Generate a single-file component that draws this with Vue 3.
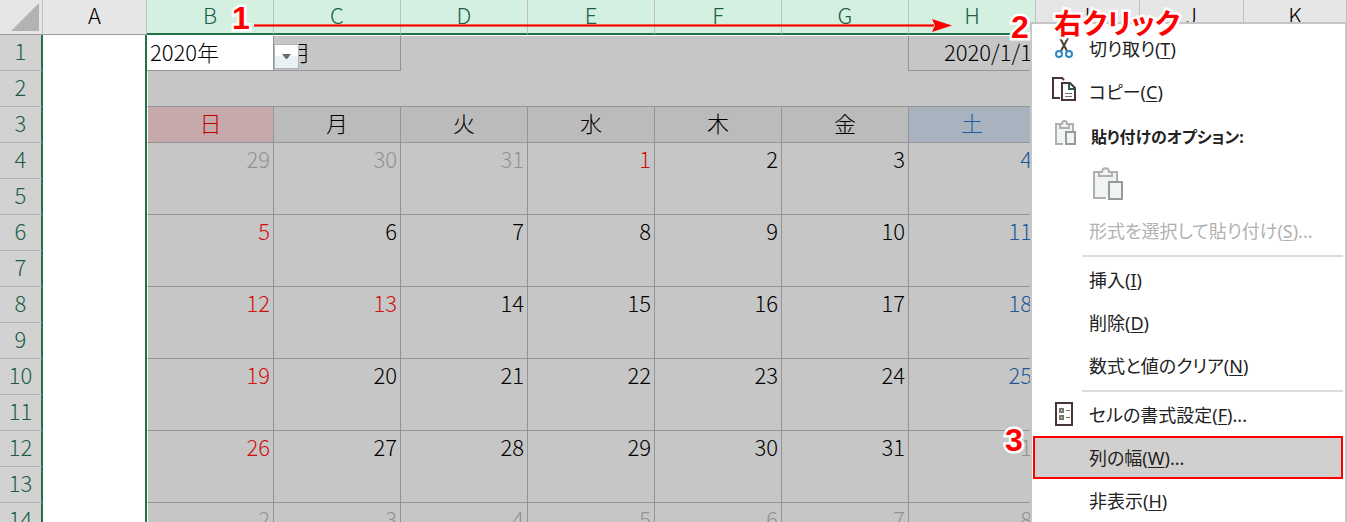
<script setup>
const columns = ["A", "B", "C", "D", "E", "F", "G", "H", "I", "J", "K"];
const days = ["日", "月", "火", "水", "木", "金", "土"];

const isSelected = (name) => name >= "B" && name <= "H";

const weeks = [
  [29, 30, 31, 1, 2, 3, 4],
  [5, 6, 7, 8, 9, 10, 11],
  [12, 13, 14, 15, 16, 17, 18],
  [19, 20, 21, 22, 23, 24, 25],
  [26, 27, 28, 29, 30, 31, 1],
  [2, 3, 4, 5, 6, 7, 8],
];

const holidays = ["0-3", "2-1"];

const dayClass = (w, d) => {
  const day = weeks[w][d];
  const other = (w === 0 && day > 7) || (w === 4 && day < 7) || w === 5;
  return {
    day: true,
    other,
    red: !other && (d === 0 || holidays.includes(`${w}-${d}`)),
    blue: !other && d === 6,
  };
};
</script>

<template>
  <main class="window">
    <table class="sheet">
      <colgroup>
        <col class="colHead" />
        <col
          v-for="name in columns"
          :key="name"
          :class="isSelected(name) ? 'colWide' : name === 'K' ? '' : 'col'"
        />
      </colgroup>
      <thead>
        <tr>
          <th class="corner">
            <svg width="43" height="33" viewBox="0 0 43 33" aria-hidden="true">
              <path d="M39 3V31H11Z" fill="#b3b3b3" />
            </svg>
          </th>
          <th
            v-for="name in columns"
            :key="name"
            scope="col"
            :class="{ selected: isSelected(name) }"
          >
            {{ name }}
          </th>
        </tr>
      </thead>
      <tbody>
        <tr class="first">
          <th scope="row">1</th>
          <td class="plain edge"></td>
          <td class="cell active line">2020年</td>
          <td class="cell line month">
            1月
            <button class="dropBtn" type="button" aria-label="年を選択">
              <svg width="9" height="5" viewBox="0 0 9 5">
                <path d="M0 0H9L5 5H4Z" fill="#6b6b63" />
              </svg>
            </button>
          </td>
          <td class="cell"></td>
          <td class="cell"></td>
          <td class="cell"></td>
          <td class="cell lineRight"></td>
          <td class="cell line date">2020/1/1</td>
          <td class="plain" colspan="3"></td>
        </tr>
        <tr>
          <th scope="row">2</th>
          <td class="plain edge"></td>
          <td class="cell lineBottom inner" colspan="7"></td>
          <td class="plain" colspan="3"></td>
        </tr>
        <tr>
          <th scope="row">3</th>
          <td class="plain edge"></td>
          <td
            v-for="(name, i) in days"
            :key="name"
            class="cell line dayName"
            :class="{ sunday: i === 0, saturday: i === 6, inner: i === 0 }"
          >
            {{ name }}
          </td>
          <td class="plain" colspan="3"></td>
        </tr>
        <template v-for="(week, w) in weeks" :key="w">
          <tr>
            <th scope="row">{{ w * 2 + 4 }}</th>
            <td class="plain edge"></td>
            <td
              v-for="(day, d) in week"
              :key="d"
              rowspan="2"
              class="cell line"
              :class="[dayClass(w, d), { inner: d === 0 }]"
            >
              {{ day }}
            </td>
            <td class="plain" colspan="3"></td>
          </tr>
          <tr>
            <th scope="row">{{ w * 2 + 5 }}</th>
            <td class="plain edge"></td>
            <td class="plain" colspan="3"></td>
          </tr>
        </template>
      </tbody>
    </table>

    <div class="menu" role="menu">
      <button type="button" role="menuitem" class="item">
        <svg class="icon" width="26" height="26" viewBox="0 0 26 26">
          <g fill="none">
            <path d="M9 4L16 17M17 4L10 17" stroke="#4a4238" stroke-width="2" />
            <circle cx="8" cy="20" r="3" stroke="#2f87c4" stroke-width="2" />
            <circle cx="18" cy="20" r="3" stroke="#2f87c4" stroke-width="2" />
          </g>
        </svg>
        <span>切り取り(<u>T</u>)</span>
      </button>
      <button type="button" role="menuitem" class="item">
        <svg class="icon" width="26" height="26" viewBox="0 0 26 26">
          <g fill="none" stroke="#4a343c" stroke-width="2">
            <path d="M9 21H2V1H11L13 3" />
            <path d="M11 6H19L24 11V23H11Z" fill="#fff" />
            <path d="M18 6V12H24" stroke="#2e5a4a" />
            <path d="M14 16.5H21M14 19.5H21" stroke="#77776a" stroke-width="1" />
          </g>
        </svg>
        <span>コピー(<u>C</u>)</span>
      </button>
      <div class="item heading">
        <svg class="icon" width="26" height="26" viewBox="0 0 26 26">
          <g fill="#f0f4f3" stroke="#b0b0b0" stroke-width="2">
            <path d="M12 24H5V4H22V11" />
            <path d="M9 8V4H11C11 0 16 0 16 4H18V8Z" />
            <path d="M15 12H24V24H15Z" stroke="#999" />
          </g>
        </svg>
        <span>貼り付けのオプション:</span>
      </div>
      <div class="pasteRow">
        <button type="button" class="pasteBtn" aria-label="貼り付け">
          <svg width="34" height="36" viewBox="0 0 34 36">
            <g fill="#f0f5f4" stroke="#b0b0b0" stroke-width="2">
              <path d="M15 31H3V5H26V14" />
              <path d="M8 9V5H11C11 0 18 0 18 5H21V9Z" />
              <path d="M18 15H31V32H18Z" stroke="#999" />
            </g>
          </svg>
        </button>
      </div>
      <button type="button" role="menuitem" class="item" disabled>
        <span>形式を選択して貼り付け(<u>S</u>)...</span>
      </button>
      <hr />
      <button type="button" role="menuitem" class="item">
        <span>挿入(<u>I</u>)</span>
      </button>
      <button type="button" role="menuitem" class="item">
        <span>削除(<u>D</u>)</span>
      </button>
      <button type="button" role="menuitem" class="item">
        <span>数式と値のクリア(<u>N</u>)</span>
      </button>
      <hr />
      <button type="button" role="menuitem" class="item">
        <svg class="icon" width="26" height="26" viewBox="0 0 26 26">
          <g fill="none">
            <path d="M5 3H21V25H5Z" stroke="#4a343c" stroke-width="2" />
            <path d="M9 9H12V12H9ZM9 16H12V19H9Z" stroke="#77776a" stroke-width="2" />
            <path d="M15 10.5H19M15 17.5H19" stroke="#77776a" stroke-width="1" />
          </g>
        </svg>
        <span>セルの書式設定(<u>F</u>)...</span>
      </button>
      <button type="button" role="menuitem" class="item current">
        <span>列の幅(<u>W</u>)...</span>
      </button>
      <button type="button" role="menuitem" class="item">
        <span>非表示(<u>H</u>)</span>
      </button>
    </div>

    <svg class="arrow" width="698" height="13" viewBox="0 0 698 13">
      <path d="M0 6.5H680" stroke="#ff0000" stroke-width="3" opacity="0.6" />
      <path d="M0 6.5H680" stroke="#ff0000" stroke-width="1" />
      <path d="M678 0L698 6.5L678 13L681 6.5Z" fill="#ff0000" />
    </svg>
    <span class="note one">1</span>
    <span class="note two">2</span>
    <span class="note click">右クリック</span>
    <span class="note three">3</span>
  </main>
</template>

<style>
body {
  margin: 0;
}
</style>

<style scoped>
.window {
  position: relative;
  height: 100vh;
  overflow: hidden;
  background: #fff;
  font-family: "Noto Sans CJK JP", sans-serif;
}

.sheet {
  width: 100%;
  table-layout: fixed;
  border-collapse: separate;
  border-spacing: 0;
  font-size: 22px;
  line-height: 30px;
  font-weight: 300;
}

.colHead {
  width: 43px;
}

.col {
  width: 104px;
}

.colWide {
  width: 127px;
}

th,
td {
  box-sizing: border-box;
  height: 36px;
  padding: 0;
  overflow: hidden;
  white-space: nowrap;
}

th {
  font-weight: 300;
  vertical-align: top;
}

thead th {
  height: 35px;
  background: #e6e6e6;
  border-right: 1px solid #bfbfbf;
  border-bottom: 1px solid #9b9b9b;
  line-height: 28px;
}

thead th.selected {
  background: #d3f0e0;
  border-bottom: 2px solid #217346;
  color: #215c47;
}

.corner svg {
  display: block;
}

tbody th {
  background: #d2d2d2;
  border-right: 2px solid #217346;
  border-bottom: 1px solid #b1b1b1;
  color: #215c47;
}

.plain {
  background: #fff;
}

.edge {
  border-right: 2px solid #217346;
}

.cell {
  background: #c6c6c6;
  vertical-align: top;
}

.first .cell {
  border-top: 1px solid #fff;
}

.inner {
  border-left: 1px solid #fff;
}

.line,
.lineRight {
  border-right: 1px solid #949494;
}

.line,
.lineBottom {
  border-bottom: 1px solid #949494;
}

.cell.active {
  background: #fff;
  padding-left: 3px;
}

.month {
  position: relative;
  padding-left: 3px;
}

.date {
  padding-right: 3px;
  text-align: right;
}

.dropBtn {
  position: absolute;
  top: 8px;
  left: 0;
  display: flex;
  align-items: center;
  justify-content: center;
  width: 25px;
  height: 25px;
  padding: 0;
  border: 1px solid #a9b4bb;
  background: linear-gradient(#fff 45%, #e9f1f5 50%);
}

.dayName {
  background: #bbb;
  text-align: center;
}

.sunday {
  background: #c6a9ab;
  color: #c00000;
}

.saturday {
  background: #a9b3bf;
  color: #1f5f9f;
}

.day {
  padding-right: 3px;
  text-align: right;
}

.other {
  color: #929292;
}

.red {
  color: #d01010;
}

.blue {
  color: #1b5a9a;
}

.menu {
  position: absolute;
  top: 22px;
  right: 0;
  box-sizing: border-box;
  width: 317px;
  padding: 3px 2px 3px 1px;
  border: 2px solid #c6c6c6;
  background: #fff;
  color: #222;
  font-family: "Noto Sans", "Noto Sans CJK JP", sans-serif;
  font-size: 18px;
  line-height: 24px;
  font-feature-settings: "palt";
}

.item {
  display: flex;
  align-items: center;
  box-sizing: border-box;
  position: relative;
  width: 100%;
  height: 43px;
  padding: 0 0 0 56px;
  border: 0;
  background: none;
  color: inherit;
  font: inherit;
  font-feature-settings: inherit;
  text-align: left;
  white-space: nowrap;
}

.item u {
  text-underline-offset: 2px;
  text-decoration-thickness: 1px;
}

.item:disabled {
  color: #b1b1b1;
}

.icon {
  position: absolute;
  top: 7px;
  left: 18px;
}

.heading {
  height: 47px;
  padding-left: 58px;
  font-size: 16px;
  font-weight: 700;
}

.pasteRow {
  display: flex;
  align-items: center;
  height: 49px;
  padding-left: 58px;
}

.pasteBtn {
  display: flex;
  padding: 0;
  border: 0;
  background: none;
}

hr {
  height: 2px;
  margin: 3px 0 1px 49px;
  border: 0;
  background: #dcdcdc;
}

.current {
  padding-left: 54px;
  border: 2px solid #ff0000;
  background: #d2d0ce;
}

.arrow {
  position: absolute;
  top: 19px;
  left: 254px;
}

.note {
  position: absolute;
  color: #ff0000;
  font-family: "Liberation Sans", "Noto Sans CJK JP", sans-serif;
  font-size: 32px;
  font-weight: 700;
  line-height: 36px;
  font-feature-settings: "palt";
  -webkit-text-stroke: 5px #fff;
  paint-order: stroke fill;
}

.one {
  top: 0;
  left: 232px;
}

.two {
  top: 9px;
  left: 1011px;
}

.click {
  top: 7px;
  left: 1054px;
  font-size: 28px;
}

.three {
  top: 422px;
  left: 1005px;
}
</style>
